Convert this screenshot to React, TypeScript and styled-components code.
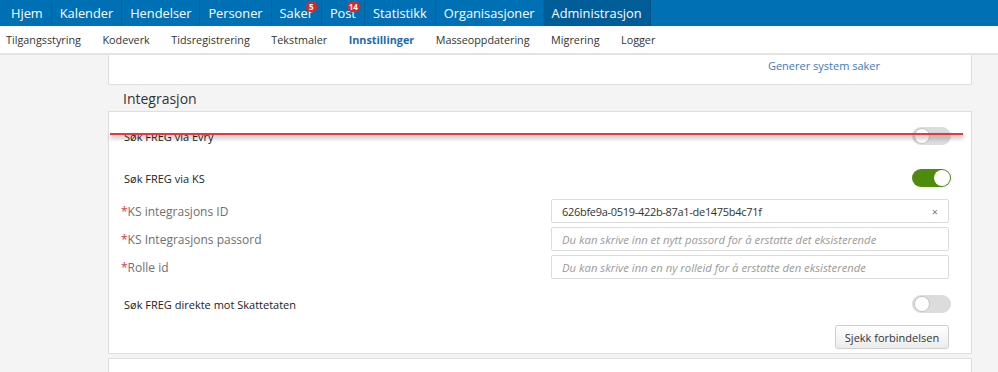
import * as React from 'react';
import styled, { createGlobalStyle } from 'styled-components';

const GlobalStyle = createGlobalStyle`
  body {
    margin: 0;
    background: #f4f4f4;
    font-family: "Open Sans", "Liberation Sans", sans-serif;
    color: #333;
  }
  * { box-sizing: border-box; }
`;

const TopNav = styled.nav`
  display: flex;
  height: 26px;
  background: #0070b5;
`;

const NavItem = styled.div<{ $active?: boolean }>`
  position: relative;
  display: flex;
  align-items: center;
  padding: 0 8px;
  font-size: 12.8px;
  color: #fff;
  background: ${(p) => (p.$active ? '#005d97' : 'transparent')};
  border-right: 1px solid rgba(0, 0, 0, 0.12);
  &:first-child { padding-left: 11px; }
`;

const Badge = styled.span`
  position: absolute;
  top: 1px;
  right: 4px;
  min-width: 11px;
  height: 11px;
  padding: 0 2px;
  border-radius: 6px;
  background: #d62a2a;
  color: #fff;
  font-size: 8px;
  font-weight: 700;
  line-height: 11px;
  text-align: center;
`;

const SubNav = styled.nav`
  display: flex;
  align-items: center;
  gap: 21.5px;
  height: 29px;
  padding-left: 6px;
  background: #fff;
  border-bottom: 2px solid #e4e4e4;
`;

const SubItem = styled.div<{ $active?: boolean }>`
  font-size: 10.8px;
  color: ${(p) => (p.$active ? '#1f6aad' : '#333')};
  font-weight: ${(p) => (p.$active ? 700 : 400)};
`;

const Main = styled.main`
  padding: 0 26px 0 108px;
`;

const Panel = styled.section`
  position: relative;
  background: #fff;
  border: 1px solid #dedede;
`;

const TopPanel = styled(Panel)`
  display: flex;
  justify-content: flex-end;
  height: 30px;
  padding: 3px 91px 0 0;
  border-top: none;
`;

const Link = styled.a`
  font-size: 11px;
  color: #3a7bbf;
  text-decoration: none;
`;

const SectionTitle = styled.h2`
  display: flex;
  align-items: center;
  height: 26px;
  margin: 0;
  padding-left: 15px;
  font-size: 14px;
  font-weight: 400;
  color: #333;
`;

const FormPanel = styled(Panel)`
  padding: 3px 20px 4px 12px;
`;

const DropLine = styled.div`
  position: absolute;
  top: 21px;
  left: 1px;
  width: 853px;
  height: 2px;
  background: #e8363c;
  box-shadow: 0 3px 4px rgba(0, 0, 0, 0.4);
  z-index: 2;
`;

const ToggleRow = styled.div`
  display: flex;
  align-items: center;
  justify-content: space-between;
  height: 42px;
  padding-left: 3px;
  font-size: 11px;
  color: #222;
`;

const Fields = styled.div`
  display: grid;
  grid-template-columns: 430px 1fr;
  row-gap: 4px;
  padding-right: 2px;
  margin-bottom: 4px;
`;

const Label = styled.label`
  display: flex;
  align-items: center;
  font-size: 12px;
  color: #6f6f6f;
`;

const Star = styled.span`
  color: #d9383a;
`;

const InputBox = styled.div`
  display: flex;
  align-items: center;
  height: 24px;
  padding: 0 10px;
  border: 1px solid #dcdcdc;
  border-radius: 2px;
  font-size: 11px;
  color: #333;
`;

const Value = styled.span`
  letter-spacing: -0.3px;
`;

const Placeholder = styled.span`
  font-size: 11.3px;
  font-style: italic;
  color: #9a9a9a;
`;

const Clear = styled.span`
  margin-left: auto;
  font-size: 11px;
  color: #777;
`;

const Switch = styled.div<{ $on?: boolean }>`
  position: relative;
  width: 39px;
  height: 18px;
  border-radius: 9px;
  background: ${(p) => (p.$on ? '#4e8a0c' : '#dcdcdc')};
  &::after {
    content: '';
    position: absolute;
    top: 1px;
    left: ${(p) => (p.$on ? '22px' : '2px')};
    width: 16px;
    height: 16px;
    border-radius: 50%;
    background: #fff;
    box-sizing: border-box;
    border: ${(p) => (p.$on ? 'none' : '1px solid #c4c4c4')};
  }
`;

const ButtonRow = styled.div`
  display: flex;
  justify-content: flex-end;
  padding-right: 2px;
`;

const Button = styled.button`
  height: 24px;
  width: 114px;
  padding: 0;
  border: 1px solid #cfcfcf;
  border-radius: 3px;
  background: linear-gradient(#fff, #ececec);
  font-family: inherit;
  font-size: 11px;
  color: #333;
`;

const NextPanel = styled(Panel)`
  margin-top: 4px;
  height: 30px;
  border-bottom: none;
`;

const topItems = ['Hjem', 'Kalender', 'Hendelser', 'Personer', 'Saker', 'Post', 'Statistikk', 'Organisasjoner', 'Administrasjon'];
const badges: Record<string, string> = { Saker: '5', Post: '14' };
const subItems = ['Tilgangsstyring', 'Kodeverk', 'Tidsregistrering', 'Tekstmaler', 'Innstillinger', 'Masseoppdatering', 'Migrering', 'Logger'];

export default function App() {
  return (
    <>
      <GlobalStyle />
      <TopNav>
        {topItems.map((t) => (
          <NavItem key={t} $active={t === 'Administrasjon'}>
            {t}
            {badges[t] && <Badge>{badges[t]}</Badge>}
          </NavItem>
        ))}
      </TopNav>
      <SubNav>
        {subItems.map((t) => (
          <SubItem key={t} $active={t === 'Innstillinger'}>{t}</SubItem>
        ))}
      </SubNav>
      <Main>
        <TopPanel>
          <Link href="#">Generer system saker</Link>
        </TopPanel>
        <SectionTitle>Integrasjon</SectionTitle>
        <FormPanel>
          <DropLine />
          <ToggleRow>
            Søk FREG via Evry
            <Switch />
          </ToggleRow>
          <ToggleRow>
            Søk FREG via KS
            <Switch $on />
          </ToggleRow>
          <Fields>
            <Label><Star>*</Star>KS integrasjons ID</Label>
            <InputBox>
              <Value>626bfe9a-0519-422b-87a1-de1475b4c71f</Value>
              <Clear>×</Clear>
            </InputBox>
            <Label><Star>*</Star>KS Integrasjons passord</Label>
            <InputBox>
              <Placeholder>Du kan skrive inn et nytt passord for å erstatte det eksisterende</Placeholder>
            </InputBox>
            <Label><Star>*</Star>Rolle id</Label>
            <InputBox>
              <Placeholder>Du kan skrive inn en ny rolleid for å erstatte den eksisterende</Placeholder>
            </InputBox>
          </Fields>
          <ToggleRow>
            Søk FREG direkte mot Skattetaten
            <Switch />
          </ToggleRow>
          <ButtonRow>
            <Button>Sjekk forbindelsen</Button>
          </ButtonRow>
        </FormPanel>
        <NextPanel />
      </Main>
    </>
  );
}
